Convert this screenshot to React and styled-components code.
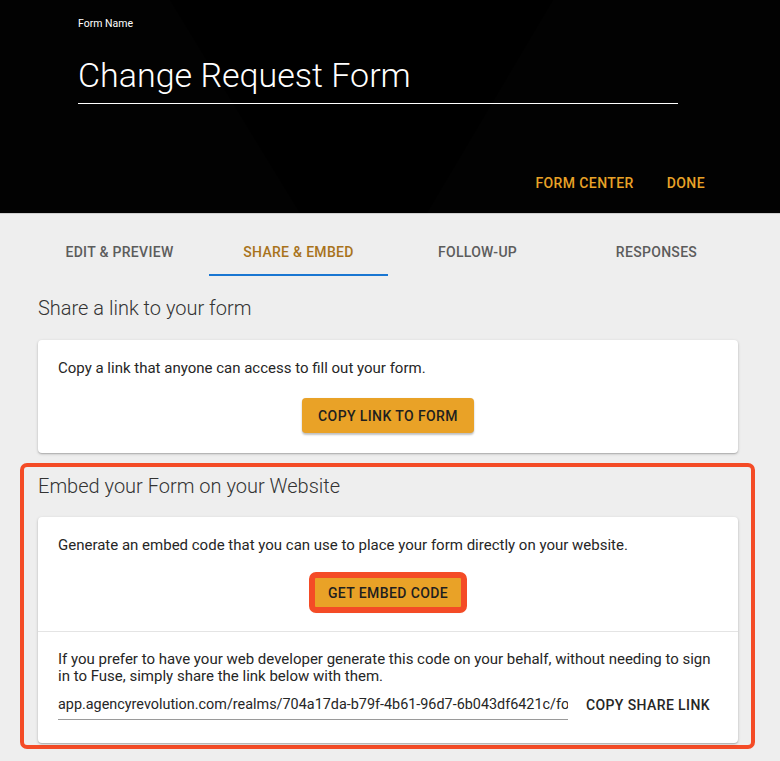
import React from "react";
import styled, { createGlobalStyle } from "styled-components";

const Global = createGlobalStyle`
  html, body { margin: 0; padding: 0; }
  body {
    background: #eeeeee;
    font-family: Roboto, "Noto Sans", "Liberation Sans", sans-serif;
    color: #212121;
  }
  * { box-sizing: border-box; }
`;

const Header = styled.header`
  position: relative;
  height: 214px;
  background: #000;
  border-bottom: 1px solid #cfcfcf;
  display: flex;
  flex-direction: column;
  padding: 18px 75px 0 78px;
  overflow: hidden;
`;

const Decor = styled.svg`
  position: absolute;
  inset: 0;
  width: 100%;
  height: 100%;
  pointer-events: none;
`;

const HeaderInner = styled.div`
  position: relative;
  display: flex;
  flex-direction: column;
  flex: 1;
`;

const FieldLabel = styled.div`
  color: #fff;
  font-size: 10.5px;
  line-height: 12px;
`;

const TitleField = styled.div`
  margin-top: 25px;
  width: 600px;
  color: #fff;
  font-size: 34px;
  font-weight: 300;
  line-height: 41px;
  padding-bottom: 7px;
  border-bottom: 1px solid #fff;
`;

const Actions = styled.div`
  margin-top: auto;
  padding-bottom: 22px;
  display: flex;
  justify-content: flex-end;
  gap: 33px;
`;

const ActionLink = styled.span`
  color: #e9a227;
  font-size: 14px;
  font-weight: 500;
  line-height: 16px;
  letter-spacing: 0.4px;
  text-transform: uppercase;
`;

const Tabs = styled.nav`
  display: flex;
  padding: 15px 34px 0 30px;
`;

const Tab = styled.div`
  flex: 1;
  height: 47px;
  display: flex;
  align-items: center;
  justify-content: center;
  font-size: 14px;
  font-weight: 500;
  letter-spacing: 0.3px;
  text-transform: uppercase;
  color: ${(p) => (p.$active ? "#a8731c" : "#5c5c5c")};
  border-bottom: 2px solid ${(p) => (p.$active ? "#1976d2" : "transparent")};
`;

const Main = styled.main`
  padding: 20px 42px 12px 38px;
`;

const SectionTitle = styled.h2`
  margin: 0 0 20px;
  font-size: 20px;
  font-weight: 300;
  line-height: 24px;
  color: #333;
`;

const Highlight = styled.section`
  margin: 10px -17px 0 -18px;
  padding: 7px 13px 2px 14px;
  border: 4px solid #f44b26;
  border-radius: 7px;

  ${SectionTitle} {
    margin-bottom: 19px;
  }
`;

const Card = styled.div`
  background: #fff;
  border-radius: 4px;
  box-shadow: 0 1px 3px rgba(0, 0, 0, 0.22), 0 1px 1px rgba(0, 0, 0, 0.12);
`;

const CardBlock = styled.div`
  padding: ${(p) => p.$pad || "18px 20px 20px"};
  display: flex;
  flex-direction: column;
  border-top: ${(p) => (p.$divided ? "1px solid #e4e4e4" : "none")};
`;

const Text = styled.p`
  margin: 0;
  font-size: 15px;
  line-height: ${(p) => p.$lh || "20px"};
  color: #262626;
`;

const RaisedButton = styled.button`
  align-self: center;
  margin-top: 20px;
  height: 35px;
  padding: 0 16px;
  border: none;
  border-radius: 4px;
  background: #e9a227;
  color: #1f1f1f;
  font-family: inherit;
  font-size: 14px;
  font-weight: 500;
  letter-spacing: 0.4px;
  text-transform: uppercase;
  box-shadow: 0 2px 2px rgba(0, 0, 0, 0.24), 0 0 1px rgba(0, 0, 0, 0.12);
  outline: ${(p) => (p.$marked ? "6px solid #f44b26" : "none")};
  outline-offset: -3px;
  cursor: pointer;
`;

const LinkRow = styled.div`
  display: flex;
  align-items: center;
  gap: 10px;
  margin-top: 5px;
`;

const LinkInput = styled.input`
  flex: 1;
  min-width: 0;
  height: 30px;
  border: none;
  border-bottom: 1px solid #9a9a9a;
  background: transparent;
  padding: 0;
  font-family: inherit;
  font-size: 14.4px;
  color: #262626;
  outline: none;
`;

const FlatButton = styled.button`
  border: none;
  background: transparent;
  padding: 6px 8px;
  font-family: inherit;
  font-size: 14px;
  font-weight: 500;
  letter-spacing: 0.4px;
  text-transform: uppercase;
  color: #262626;
  cursor: pointer;
`;

const shareUrl =
  "app.agencyrevolution.com/realms/704a17da-b79f-4b61-96d7-6b043df6421c/forms/change-request-form/embed";

export default function App() {
  return (
    <>
      <Global />
      <Header>
        <Decor viewBox="0 0 780 214" preserveAspectRatio="none">
          <polygon points="0,0 170,0 300,214 0,214" fill="#020202" />
          <polygon points="553,0 780,0 780,214 427,214" fill="#020202" />
        </Decor>
        <HeaderInner>
          <FieldLabel>Form Name</FieldLabel>
          <TitleField>Change Request Form</TitleField>
          <Actions>
            <ActionLink>Form Center</ActionLink>
            <ActionLink>Done</ActionLink>
          </Actions>
        </HeaderInner>
      </Header>

      <Tabs>
        <Tab>Edit &amp; Preview</Tab>
        <Tab $active>Share &amp; Embed</Tab>
        <Tab>Follow-Up</Tab>
        <Tab>Responses</Tab>
      </Tabs>

      <Main>
        <section>
          <SectionTitle>Share a link to your form</SectionTitle>
          <Card>
            <CardBlock>
              <Text>Copy a link that anyone can access to fill out your form.</Text>
              <RaisedButton>Copy Link to Form</RaisedButton>
            </CardBlock>
          </Card>
        </section>

        <Highlight>
          <SectionTitle>Embed your Form on your Website</SectionTitle>
          <Card>
            <CardBlock $pad="18px 20px 21px">
              <Text>
                Generate an embed code that you can use to place your form directly on your website.
              </Text>
              <RaisedButton $marked>Get Embed Code</RaisedButton>
            </CardBlock>
            <CardBlock $divided $pad="19px 20px 23px">
              <Text $lh="17px">
                If you prefer to have your web developer generate this code on your behalf, without
                needing to sign in to Fuse, simply share the link below with them.
              </Text>
              <LinkRow>
                <LinkInput readOnly value={shareUrl} />
                <FlatButton>Copy Share Link</FlatButton>
              </LinkRow>
            </CardBlock>
          </Card>
        </Highlight>
      </Main>
    </>
  );
}
